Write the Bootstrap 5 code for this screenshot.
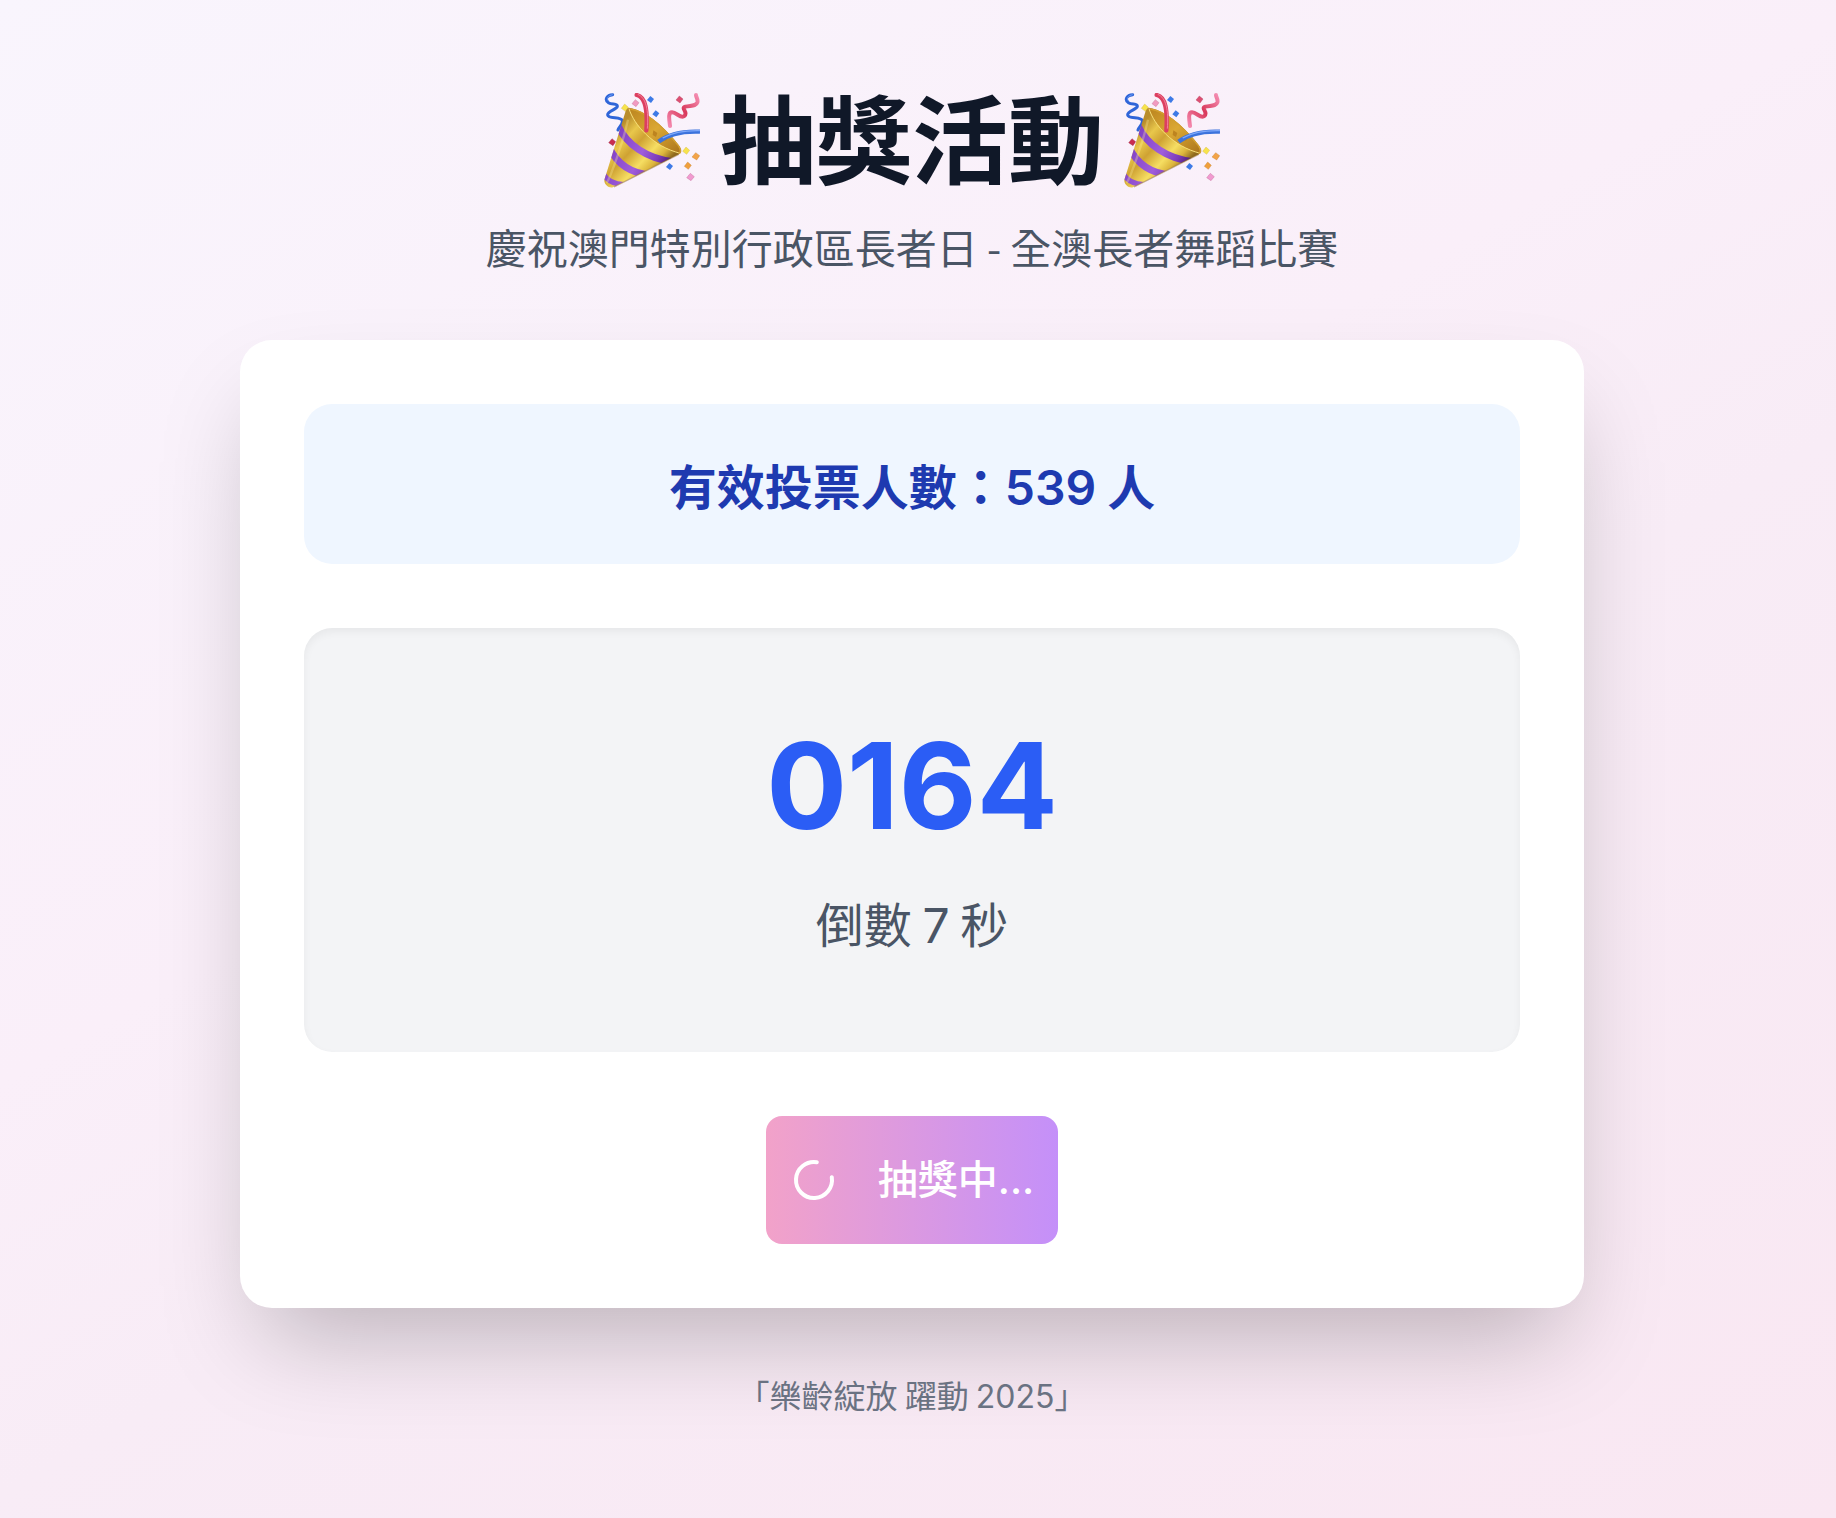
<!DOCTYPE html>
<html lang="zh-Hant">
<head>
<meta charset="utf-8">
<meta name="viewport" content="width=device-width, initial-scale=1">
<title>抽獎活動</title>
<link href="https://cdn.jsdelivr.net/npm/bootstrap@5.3.0/dist/css/bootstrap.min.css" rel="stylesheet">
<style>
  body {
    font-family: "Noto Sans CJK TC", sans-serif;
    background: linear-gradient(150deg, #f9f5fd, #faeff9 42%, #f8ecf6 58%, #f9e7f2);
  }
  .latin { font-family: Inter, "Noto Sans CJK TC", sans-serif; }
  span.latin { line-height: 1; }
  .page-shell { padding: 92px 36px 72px 24px; }
  .draw-title { font-size: 96px; line-height: 98px; font-weight: 700; color: #101828; gap: 20px; margin-bottom: 30px; }
  .draw-title svg { width: 96px; height: 96px; flex: none; }
  .draw-subtitle { font-size: 41px; line-height: 52px; color: #4a5565; margin-bottom: 68px; }
  .draw-panel { width: 100%; max-width: 1344px; border-radius: 32px; padding: 64px; gap: 64px; box-shadow: 0 50px 100px -24px rgba(0, 0, 0, .25); }
  .voter-count { background: #eff6ff; color: #1e3ab0; border-radius: 28px; padding: 48px; font-size: 48px; line-height: 64px; font-weight: 600; }
  .draw-stage { background: #f3f4f6; border-radius: 28px; padding: 96px 48px; box-shadow: inset 0 4px 8px rgba(0, 0, 0, .05); }
  .draw-number { font-size: 120px; line-height: 124px; font-weight: 700; color: #2b5df5; margin-bottom: 40px; }
  .draw-countdown { font-size: 48px; line-height: 68px; color: #4a5565; }
  .draw-btn, .draw-btn:disabled { border: 0; border-radius: 16px; padding: 32px 24px; gap: 40px; font-size: 40px; line-height: 64px; font-weight: 500; color: #fff; opacity: 1; background: linear-gradient(to right, #f2a2c9, #c490f9); }
  .draw-btn svg { width: 48px; height: 48px; }
  .draw-footer { font-size: 32px; line-height: 44px; color: #6a7282; margin-top: 64px; }
</style>
</head>
<body class="min-vh-100">
<svg class="position-absolute" width="0" height="0" aria-hidden="true">
  <defs>
    <linearGradient id="gold" gradientUnits="userSpaceOnUse" x1="60" y1="170" x2="190" y2="290">
      <stop offset="0" stop-color="#b98d2c"/><stop offset=".22" stop-color="#e9c74b"/><stop offset=".42" stop-color="#cfa233"/><stop offset=".68" stop-color="#f6de62"/><stop offset=".85" stop-color="#dcb53c"/><stop offset="1" stop-color="#8f6a1d"/>
    </linearGradient>
    <linearGradient id="mouth" x1="0" y1="0" x2="1" y2="1">
      <stop offset="0" stop-color="#b9821e"/><stop offset=".5" stop-color="#dba834"/><stop offset="1" stop-color="#a8721a"/>
    </linearGradient>
    <linearGradient id="violet" gradientUnits="userSpaceOnUse" x1="50" y1="180" x2="230" y2="270">
      <stop offset="0" stop-color="#7a3bc0"/><stop offset=".55" stop-color="#9f5edb"/><stop offset=".8" stop-color="#7d3cba"/><stop offset="1" stop-color="#481a72"/>
    </linearGradient>
    <linearGradient id="rose" x1="0" y1="1" x2="1" y2="0">
      <stop offset="0" stop-color="#f58bb0"/><stop offset=".5" stop-color="#d93a5c"/><stop offset="1" stop-color="#f48bb0"/>
    </linearGradient>
    <clipPath id="coneClip"><path d="M117 84C111 84 108 86 107 92L43 299C42 314 60 326 70 320L272 219C190 200 130 130 117 84Z"/></clipPath>
  </defs>
</svg>
<main class="page-shell d-flex flex-column align-items-center text-center">
  <h1 class="draw-title latin d-flex align-items-center justify-content-center">
    <svg viewBox="42 38 288 288" role="img" aria-label="派對拉炮">
      <g id="popper">
        <path d="M68 43C50 44 43 58 55 67C66 74 83 68 82 78C80 88 52 92 53 104C55 117 94 108 97 121C99 133 87 139 84 149" fill="none" stroke="#2f65d8" stroke-width="9" stroke-linecap="round"/>
        <path d="M68 43C54 45 48 56 57 63" fill="none" stroke="#6a9cf5" stroke-width="3"/>
        <path d="M118 84C107 82 106 91 112 102C135 150 190 203 262 221C274 222 276 210 267 197C229 146 168 91 118 84Z" fill="url(#mouth)" stroke="#a87520" stroke-width="2"/>
        <path d="M190 150l12 8-4 12-10-6zM222 168l10 8-4 7-9-5z" fill="#bd8420"/>
        <path d="M117 84C111 84 108 86 107 92L43 299C42 314 60 326 70 320L272 219C190 200 130 130 117 84Z" fill="url(#gold)"/>
        <g clip-path="url(#coneClip)" fill="none" stroke="url(#violet)" stroke-width="21">
          <path d="M84 136C110 192 170 236 250 244"/>
          <path d="M58 202C80 248 120 278 180 284"/>
          <path d="M38 278C52 304 74 314 110 312" stroke-width="15"/>
        </g>
        <path d="M117 85C132 134 188 198 271 219" fill="none" stroke="#f7df79" stroke-width="3"/>
        <path d="M121 86C170 94 225 146 265 196C273 208 272 216 266 219" fill="none" stroke="#d4a02e" stroke-width="4"/>
        <path d="M50 308C62 288 98 190 114 118" fill="none" stroke="#fff1a0" stroke-opacity=".3" stroke-width="7"/>
        <path d="M266 222L72 320" fill="none" stroke="#8b6418" stroke-opacity=".5" stroke-width="4"/>
        <path d="M140 44C167 50 173 88 169 150" fill="none" stroke="#dc3f60" stroke-width="13" stroke-linecap="round"/>
        <path d="M143 42C169 52 176 90 172 145" fill="none" stroke="#f37f99" stroke-width="3"/>
        <path d="M206 184C235 161 280 152 330 154" fill="none" stroke="#3c73dc" stroke-width="13"/>
        <path d="M218 173C248 156 285 150 330 151" fill="none" stroke="#7fa9fa" stroke-width="4"/>
        <path d="M240 137C238 119 233 96 246 96C260 96 272 116 283 107C296 96 271 83 286 79C303 75 318 78 322 66C325 56 318 51 318 44" fill="none" stroke="url(#rose)" stroke-width="12" stroke-linecap="round" stroke-linejoin="round"/>
        <g stroke-width="1">
          <path d="M181 47l11 9-9 12-12-9z" fill="#3d7ae6"/><path d="M197 90l11 9-9 12-12-9z" fill="#3d7ae6"/><path d="M238 248l11 9-9 12-12-9z" fill="#3d7ae6"/>
          <path d="M104 71l11 10-9 12-12-9z" fill="#f7e34c" stroke="#c9ad3c"/><path d="M288 200l11 10-9 12-12-9z" fill="#f7e34c" stroke="#c9ad3c"/>
          <path d="M136 58l11 9-9 12-12-9z" fill="#f19ac0" stroke="#b5618a"/><path d="M301 279l12 10-10 12-13-9z" fill="#f19ad0" stroke="#b5618a"/>
          <path d="M268 47l11 9-9 12-12-9z" fill="#dd4f72" stroke="#a8304e"/><path d="M66 175l11 9-8 12-13-9z" fill="#c92d50" stroke="#8d2340"/>
          <path d="M317 217l12 9-9 13-14-9z" fill="#f3a347" stroke="#bd7424"/><path d="M293 245l11 10-9 12-12-9z" fill="#f0a03c" stroke="#bd7424"/>
        </g>
      </g>
    </svg>
    <span>抽獎活動</span>
    <svg viewBox="42 38 288 288" role="img" aria-label="派對拉炮"><use href="#popper"/></svg>
  </h1>
  <p class="draw-subtitle">慶祝澳門特別行政區長者日 - 全澳長者舞蹈比賽</p>
  <section class="draw-panel bg-white d-flex flex-column align-items-center">
    <div class="voter-count w-100">有效投票人數：<span class="latin">539</span> 人</div>
    <div class="draw-stage w-100">
      <div class="draw-number latin">0164</div>
      <div class="draw-countdown">倒數 <span class="latin">7</span> 秒</div>
    </div>
    <button type="button" class="draw-btn latin btn d-inline-flex align-items-center" disabled>
      <svg viewBox="0 0 24 24" fill="none" stroke="#fff" stroke-width="2" stroke-linecap="round" aria-hidden="true"><path transform="rotate(-9 12 12)" d="M21 12a9 9 0 1 1-6.219-8.56"/></svg>
      <span>抽獎中...</span>
    </button>
  </section>
  <footer class="draw-footer">「樂齡綻放 躍動 <span class="latin">2025</span>」</footer>
</main>
<script src="https://cdn.jsdelivr.net/npm/bootstrap@5.3.0/dist/js/bootstrap.bundle.min.js"></script>
</body>
</html>
